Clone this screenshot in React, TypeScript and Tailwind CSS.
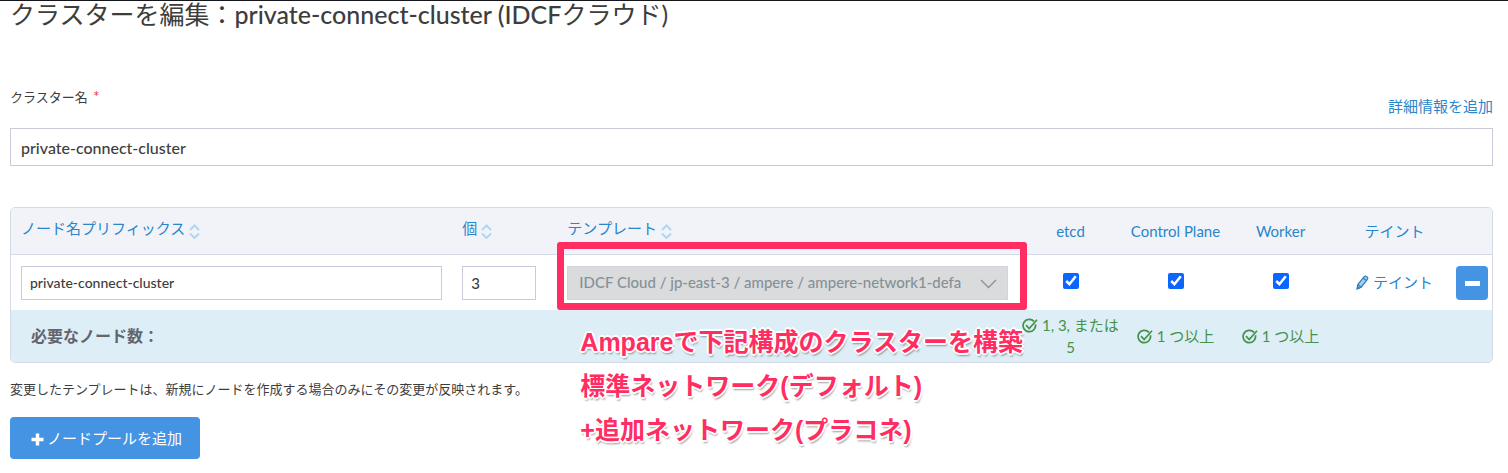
import { useState } from "react";
import type { ReactNode } from "react";

const SortIcon = () => (
  <svg width="11" height="15" viewBox="0 0 11 15" fill="none" stroke="#b3d5ee" strokeWidth="2">
    <path d="M1 6 L5.5 1.5 L10 6" />
    <path d="M1 9.5 L5.5 14 L10 9.5" />
  </svg>
);

const CheckIcon = () => (
  <svg
    className="inline-block align-[-3px]"
    width="16"
    height="16"
    viewBox="0 0 16 16"
    fill="none"
    stroke="#44924b"
    strokeWidth="1.7"
  >
    <path d="M12 3.4 A6.2 6.2 0 1 0 13.4 6.2" />
    <path d="M4 7.2 L7.2 10.6 L15 1.8" />
  </svg>
);

const PencilIcon = () => (
  <svg width="13" height="15" viewBox="0 0 13 15" fill="none" stroke="#2a7fc0" strokeWidth="1.2">
    <path d="M1.2 13.8 L1.8 9.6 L8 1.8 Q9.2 0.6 10.6 1.6 Q12.4 2.8 11.4 4.4 L5.2 12.2 Z" fill="#a9cdea" />
    <path d="M7.2 3 L10.4 5.6 M1.8 9.6 L5.2 12.2" />
    <path d="M1.2 13.8 L1.5 11.8 L3 13 Z" fill="#2a7fc0" />
  </svg>
);

const SortHeader = ({ children }: { children: ReactNode }) => (
  <button type="button" className="flex items-center gap-1 pb-1.5">
    <span>{children}</span>
    <span className="pt-1.5">
      <SortIcon />
    </span>
  </button>
);

const roles = [
  { id: "etcd", title: "etcd", need: "1, 3, または 5" },
  { id: "controlPlane", title: "Control Plane", need: "1 つ以上" },
  { id: "worker", title: "Worker", need: "1 つ以上" },
];

export default function App() {
  const [name, setName] = useState("private-connect-cluster");
  const [prefix, setPrefix] = useState("private-connect-cluster");
  const [count, setCount] = useState("3");

  return (
    <main className="border-t border-[#15151c] bg-white pr-[15px] pb-3 pl-[10px] font-['Lato','Noto_Sans_CJK_JP',sans-serif] text-[15px] text-[#3d3d3d]">
      <h1 className="text-[25px] leading-[26px]">
        クラスターを編集：<span className="font-medium">private-connect-cluster (IDCF</span>クラウド)
      </h1>

      <div className="mt-[59px] flex h-[33px] items-start justify-between">
        <label htmlFor="cluster-name" className="text-[13px] leading-5">
          クラスター名 <span className="ml-0.5 text-[16px] text-[#f03c3c]">*</span>
        </label>
        <a href="#" className="mt-2 leading-6 text-[#2a85c9]">
          詳細情報を追加
        </a>
      </div>
      <input
        id="cluster-name"
        value={name}
        onChange={e => setName(e.target.value)}
        className="mt-[9px] h-[38px] w-full border border-[#c9cbdc] px-[10px] text-[16px] font-medium"
      />

      <table className="mt-[41px] w-full table-fixed border-separate border-spacing-0 rounded-[5px] border border-[#d6d9e6]">
        <thead>
          <tr className="h-[47px] text-[#2a85c9] *:border-b *:border-[#d6d9e6] *:bg-[#f2f3f9] *:font-normal">
            <th className="w-[29.8%] rounded-tl px-[10px]">
              <SortHeader>ノード名プリフィックス</SortHeader>
            </th>
            <th className="w-[105px] px-[10px]">
              <SortHeader>個</SortHeader>
            </th>
            <th className="px-[10px]">
              <SortHeader>テンプレート</SortHeader>
            </th>
            {roles.map(role => (
              <th key={role.id} className="w-[105px]">
                {role.title}
              </th>
            ))}
            <th className="w-[123px]">テイント</th>
            <th className="w-[36px] rounded-tr" />
          </tr>
        </thead>
        <tbody>
          <tr className="h-[55px]">
            <td className="px-[10px]">
              <input
                aria-label="ノード名プリフィックス"
                value={prefix}
                onChange={e => setPrefix(e.target.value)}
                className="block h-[34px] w-full border border-[#c9cbdc] px-2 text-[14px] font-medium"
              />
            </td>
            <td className="px-[10px]">
              <input
                aria-label="個"
                value={count}
                onChange={e => setCount(e.target.value)}
                className="block h-[34px] w-[74px] border border-[#c9cbdc] px-2 font-medium"
              />
            </td>
            <td className="relative px-[10px]">
              <div className="relative">
                <select
                  disabled
                  aria-label="テンプレート"
                  className="block h-[34px] w-full appearance-none border border-[#d2d5dc] bg-[#d9dbdd] px-[11px] text-[15px] font-medium text-[#879095] opacity-100"
                >
                  <option>IDCF Cloud / jp-east-3 / ampere / ampere-network1-defa</option>
                </select>
                <svg
                  className="absolute top-[13px] right-[11px]"
                  width="17"
                  height="10"
                  viewBox="0 0 17 10"
                  fill="none"
                  stroke="#879095"
                  strokeWidth="1.3"
                >
                  <path d="M1 1 L8.5 8.5 L16 1" />
                </svg>
              </div>
              {/* callout frame and its note */}
              <div className="pointer-events-none absolute -top-[13px] -right-[9px] bottom-0 left-0 rounded-[3px] border-[7px] border-[#ff2d62]" />
              <p className="pointer-events-none absolute top-[65px] left-[23px] z-10 font-['Liberation_Sans','Noto_Sans_CJK_JP',sans-serif] text-[25px] leading-[44px] font-bold whitespace-nowrap text-[#ff2d62] [text-shadow:-2px_0_white,2px_0_white,0_-2px_white,0_2px_white,-1px_-1px_white,1px_-1px_white,-1px_1px_white,1px_1px_white,1px_3px_2px_#00000060]">
                Ampareで下記構成のクラスターを構築
                <br />
                標準ネットワーク(デフォルト)
                <br />
                +追加ネットワーク(プラコネ)
              </p>
            </td>
            {roles.map(role => (
              <td key={role.id} className="text-center">
                <input
                  type="checkbox"
                  defaultChecked
                  aria-label={role.title}
                  className="mb-1.5 inline-block size-4 align-middle accent-[#0a66ff]"
                />
              </td>
            ))}
            <td>
              <a href="#" className="flex items-center justify-center gap-1 text-[#2a85c9]">
                <PencilIcon />
                テイント
              </a>
            </td>
            <td>
              <button
                type="button"
                aria-label="削除"
                className="flex h-[34px] w-8 items-center justify-center rounded bg-[#4593e3]"
              >
                <span className="mt-0.5 h-[5px] w-[15px] bg-white" />
              </button>
            </td>
          </tr>
          <tr className="h-[52px] *:bg-[#deeef6]">
            <td colSpan={3} className="rounded-bl px-5 text-[16px] font-bold text-[#63646e]">
              必要なノード数：
            </td>
            {roles.map(role => (
              <td key={role.id} className="text-center leading-[22px] text-[#44924b]">
                <CheckIcon /> {role.need}
              </td>
            ))}
            <td colSpan={2} className="rounded-br" />
          </tr>
        </tbody>
      </table>

      <p className="mt-4 text-[13px] leading-5">
        変更したテンプレートは、新規にノードを作成する場合のみにその変更が反映されます。
      </p>

      <button
        type="button"
        className="mt-[18px] flex h-[42px] items-center gap-[3px] rounded bg-[#4593e3] pr-[18px] pl-[21px] text-white"
      >
        <svg className="mt-0.5" width="13" height="13" viewBox="0 0 13 13" fill="none" stroke="white" strokeWidth="3.4">
          <path d="M6.5 0.5 V12.5 M0.5 6.5 H12.5" />
        </svg>
        ノードプールを追加
      </button>
    </main>
  );
}
